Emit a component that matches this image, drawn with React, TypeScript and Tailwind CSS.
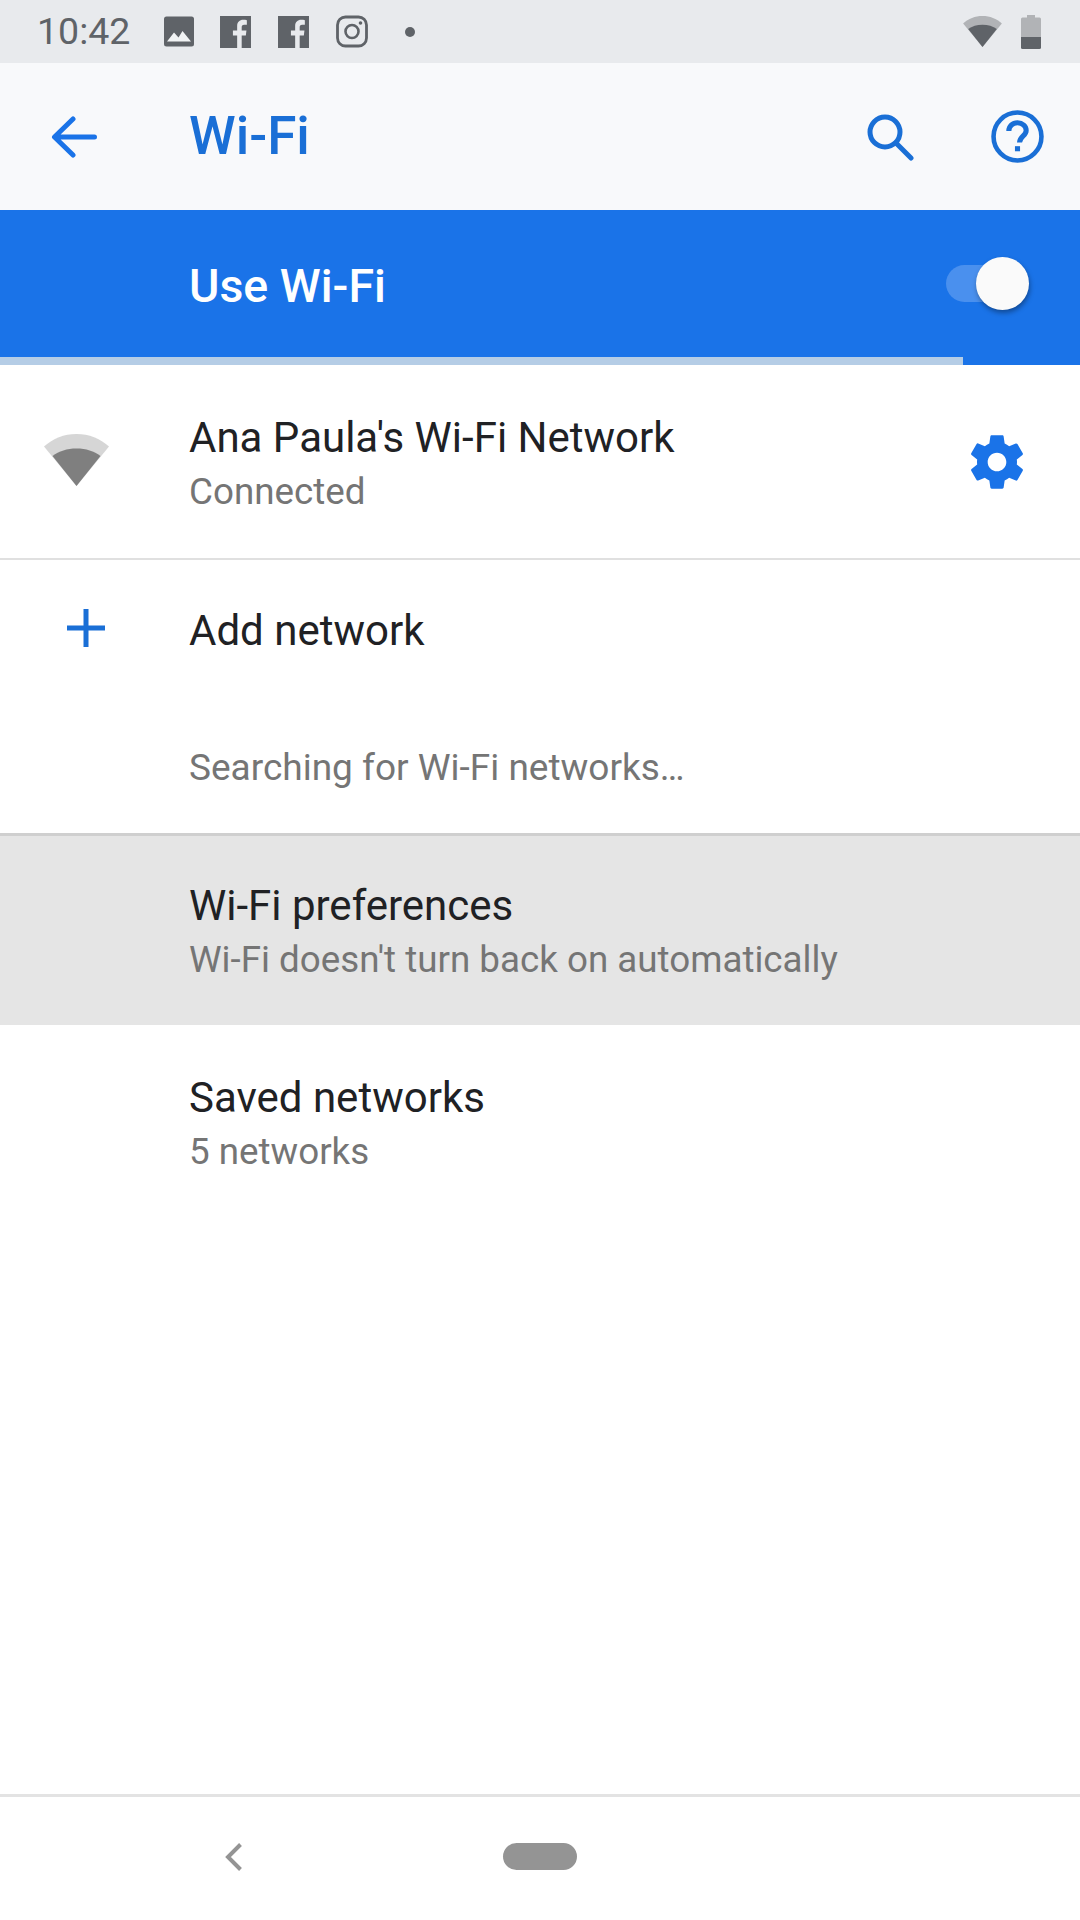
import React from "react";

const blue = "#1a73e8";

function WifiIcon({ className, dark, light }: { className: string; dark: string; light: string }) {
  return (
    <svg viewBox="0 0 65 52" className={className}>
      <path d="M0 12.5C9 4.5 20 0 32.5 0S56 4.5 65 12.5L32.5 52z" fill={light} />
      <path d="M8.5 22C15 17 23 14.500 32.500 14.500S50 17 56.500 22L32.500 52z" fill={dark} />
    </svg>
  );
}

function FacebookIcon() {
  return (
    <svg viewBox="0 0 30 31" className="w-[31px] h-[32px]">
      <path
        d="M0 0h30v31h-9V19h4l.6-5H21v-3c0-1.500.5-2.500 2.500-2.500H26V4c-1-.2-2.200-.3-3.500-.3-3.500 0-5.900 2.200-5.900 6.100V14H12.500v5h4.100v12H0z"
        fill="#5f6368"
      />
    </svg>
  );
}

function StatusBar() {
  return (
    <div className="h-[63px] bg-[#e8eaed] flex items-center pl-[37px] pr-[39px] shrink-0">
      <span className="text-[37.500px] text-[#5f6368] w-[127px] leading-none">10:42</span>
      <svg viewBox="0 0 30 30" className="w-[30px] h-[31px]">
        <rect width="30" height="30" rx="2.500" fill="#5f6368" />
        <path d="M3 25l7-9 4.500 5 4-6.500L27 25z" fill="#f1f3f4" />
      </svg>
      <div className="ml-[26px]">
        <FacebookIcon />
      </div>
      <div className="ml-[27px]">
        <FacebookIcon />
      </div>
      <svg viewBox="0 0 32 32" className="w-[32px] h-[33px] ml-[27px]" fill="none" stroke="#5f6368">
        <rect x="1.500" y="1.500" width="29" height="29" rx="8" strokeWidth="2.800" />
        <circle cx="16" cy="16" r="6.500" strokeWidth="2.600" />
        <circle cx="24.500" cy="7.500" r="1.800" fill="#5f6368" stroke="none" />
      </svg>
      <div className="w-[10px] h-[10px] rounded-full bg-[#5f6368] ml-[37px]" />
      <div className="ml-auto flex items-center gap-[18px]">
        <WifiIcon className="w-[41px] h-[31px]" dark="#5f6368" light="#b1b3b6" />
        <svg viewBox="0 0 20 34" className="w-[20px] h-[34px]">
          <path d="M6 0h8v2.500h4.500q1.500 0 1.500 1.500v18H0V4q0-1.500 1.500-1.500H6z" fill="#b1b3b6" />
          <path d="M0 22h20v10.500q0 1.500-1.500 1.500h-17Q0 34 0 32.500z" fill="#5f6368" />
        </svg>
      </div>
    </div>
  );
}

function Toolbar() {
  return (
    <div className="h-[147px] bg-[#f8f9fb] flex items-center shrink-0">
      <svg viewBox="0 0 46 42" className="w-[46px] h-[42px] ml-[51px]" fill="none" stroke={blue} strokeWidth="5" strokeLinecap="round" strokeLinejoin="round">
        <path d="M43.500 21H4M22 3L3.500 21 22 39" />
      </svg>
      <span className="ml-[92px] text-[53px] font-medium text-[#1a6fd6] leading-none">Wi-Fi</span>
      <svg viewBox="0 0 48 48" className="w-[48px] h-[48px] ml-auto mr-[77px]" fill="none" stroke="#1a6fd6" strokeWidth="5" strokeLinecap="round">
        <circle cx="19" cy="19" r="15" />
        <path d="M30 30l15 15" />
      </svg>
      <svg viewBox="0 0 52 52" className="w-[53px] h-[53px] mr-[36px]" fill="none" stroke="#1a6fd6">
        <circle cx="26" cy="26" r="23.500" strokeWidth="4.500" />
        <path d="M17.500 20.500c0-4.500 3.500-8 8.500-8s8.500 3.500 8.500 7.500c0 5.500-6.500 6-6.500 12" strokeWidth="5" fill="none" />
        <rect x="23.500" y="35.500" width="5" height="5" fill="#1a6fd6" stroke="none" />
      </svg>
    </div>
  );
}

function UseWifiBar() {
  return (
    <div className="h-[155px] bg-[#1a73e8] shrink-0 flex flex-col">
      <div className="flex-1 flex items-center pl-[189px] pt-[5px] relative">
        <span className="text-[46.500px] font-medium text-white leading-none">Use Wi-Fi</span>
        <div className="absolute left-[946px] top-[55px] w-[70px] h-[37px] rounded-full bg-[#4a90ee]" />
        <div className="absolute left-[976px] top-[47px] w-[53px] h-[53px] rounded-full bg-[#fafafa] shadow-[1px_3px_5px_rgba(0,0,0,0.35)]" />
      </div>
      <div className="h-[8px] w-[963px] bg-[#b5cde6]" />
    </div>
  );
}

function Row({ title, subtitle, icon, trailing, className, textClass = "pt-[6px]" }: { title: string; subtitle?: string; icon?: React.ReactNode; trailing?: React.ReactNode; className: string; textClass?: string }) {
  return (
    <div className={`flex items-center shrink-0 ${className}`}>
      <div className="w-[189px] h-full flex items-center shrink-0">{icon}</div>
      <div className={`flex flex-col ${textClass}`}>
        <span className="text-[42px] leading-[54px] text-[#202124]">{title}</span>
        {subtitle && <span className="text-[36.750px] leading-[54px] text-[#757575]">{subtitle}</span>}
      </div>
      {trailing}
    </div>
  );
}

export default function App() {
  return (
    <div className="w-[1080px] h-[1920px] bg-white flex flex-col font-['Roboto',sans-serif] overflow-hidden">
      <StatusBar />
      <Toolbar />
      <UseWifiBar />
      <Row
        className="h-[193px]"
        title="Ana Paula's Wi-Fi Network"
        subtitle="Connected"
        icon={<WifiIcon className="w-[65px] h-[52px] ml-[44px] mb-[3px]" dark="#7f7f7f" light="#d6d6d6" />}
        trailing={
          <svg viewBox="0 0 24 24" className="w-[64px] h-[64px] ml-auto mr-[51px]" fill="#1a73e8">
            <path d="M19.430 12.980c.04-.32.07-.64.07-.98s-.03-.66-.07-.98l2.110-1.650c.19-.15.240-.42.120-.64l-2-3.460c-.12-.22-.39-.3-.61-.22l-2.490 1c-.52-.4-1.080-.73-1.690-.98l-.38-2.650C14.460 2.180 14.250 2 14 2h-4c-.25 0-.46.18-.49.42l-.38 2.650c-.61.25-1.170.59-1.690.98l-2.490-1c-.23-.09-.49 0-.61.22l-2 3.460c-.13.22-.07.49.12.64l2.110 1.650c-.04.32-.07.65-.07.98s.03.66.07.98l-2.110 1.650c-.19.15-.24.42-.12.64l2 3.460c.12.22.39.3.61.22l2.490-1c.52.4 1.080.73 1.690.98l.38 2.650c.03.24.24.42.49.42h4c.25 0 .46-.18.49-.42l.38-2.650c.61-.25 1.170-.59 1.690-.98l2.490 1c.23.09.49 0 .61-.22l2-3.460c.12-.22.07-.49-.12-.64l-2.110-1.650zM12 15.500c-1.930 0-3.500-1.570-3.500-3.500s1.570-3.500 3.500-3.500 3.500 1.570 3.500 3.500-1.570 3.500-3.500 3.500z" />
          </svg>
        }
      />
      <div className="h-[2px] bg-[#e0e0e0] shrink-0" />
      <Row
        className="h-[140px]"
        textClass="pt-[2px]"
        title="Add network"
        icon={
          <svg viewBox="0 0 38 38" className="w-[38px] h-[38px] ml-[67px] mb-[4px]" fill="none" stroke="#1a6fd6" strokeWidth="5">
            <path d="M19 0v38M0 19h38" />
          </svg>
        }
      />
      <div className="h-[133px] pl-[189px] pt-[1px] flex items-center shrink-0">
        <span className="text-[37px] text-[#757575] leading-none">Searching for Wi-Fi networks…</span>
      </div>
      <div className="h-[3px] bg-[#cfcfcf] shrink-0" />
      <Row className="h-[189px] bg-[#e5e5e5]" textClass="pt-[4px]" title="Wi-Fi preferences" subtitle="Wi-Fi doesn't turn back on automatically" />
      <Row className="h-[194px]" textClass="pt-[5px]" title="Saved networks" subtitle="5 networks" />
      <div className="flex-1" />
      <div className="h-[3px] bg-[#e3e3e3] shrink-0" />
      <div className="h-[123px] shrink-0 relative">
        <svg viewBox="0 0 18 28" className="w-[18px] h-[28px] absolute left-[225px] top-[46px]" fill="none" stroke="#949494" strokeWidth="4">
          <path d="M15.500 1.500L3 14l12.500 12.500" />
        </svg>
        <div className="absolute left-[503px] top-[46px] w-[74px] h-[27px] rounded-full bg-[#949494]" />
      </div>
    </div>
  );
}
